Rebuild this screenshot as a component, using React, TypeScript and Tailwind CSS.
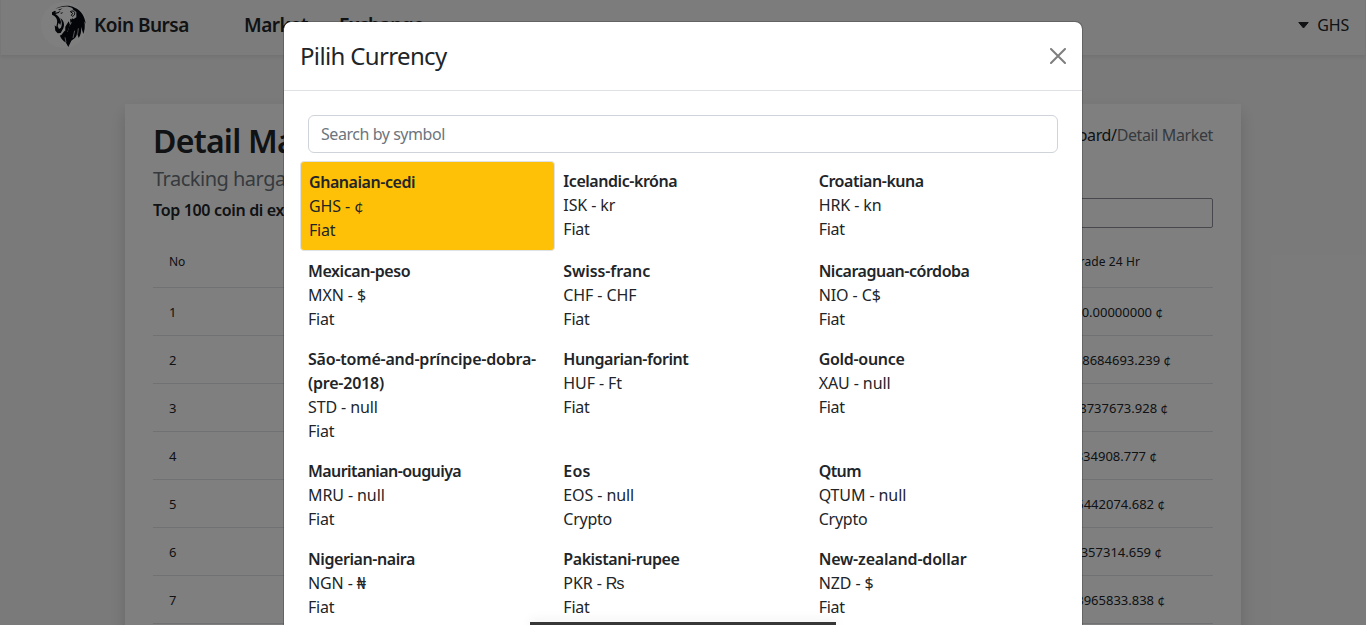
import React from "react";

type Currency = { name: string; code: string; sign: string; kind: string; fit: string };

const currencies: Currency[] = [
  { name: "Ghanaian-cedi", code: "GHS", sign: "¢", kind: "Fiat", fit: "tracking-[-0.45px]" },
  { name: "Icelandic-króna", code: "ISK", sign: "kr", kind: "Fiat", fit: "tracking-[-0.45px]" },
  { name: "Croatian-kuna", code: "HRK", sign: "kn", kind: "Fiat", fit: "tracking-[-0.45px]" },
  { name: "Mexican-peso", code: "MXN", sign: "$", kind: "Fiat", fit: "tracking-[-0.42px]" },
  { name: "Swiss-franc", code: "CHF", sign: "CHF", kind: "Fiat", fit: "tracking-[-0.08px]" },
  { name: "Nicaraguan-córdoba", code: "NIO", sign: "C$", kind: "Fiat", fit: "tracking-[-0.47px]" },
  { name: "São-tomé-and-príncipe-dobra-(pre-2018)", code: "STD", sign: "null", kind: "Fiat", fit: "tracking-[-0.21px]" },
  { name: "Hungarian-forint", code: "HUF", sign: "Ft", kind: "Fiat", fit: "tracking-[-0.44px]" },
  { name: "Gold-ounce", code: "XAU", sign: "null", kind: "Fiat", fit: "tracking-[-0.3px]" },
  { name: "Mauritanian-ouguiya", code: "MRU", sign: "null", kind: "Fiat", fit: "tracking-[-0.58px]" },
  { name: "Eos", code: "EOS", sign: "null", kind: "Crypto", fit: "tracking-[0.2px]" },
  { name: "Qtum", code: "QTUM", sign: "null", kind: "Crypto", fit: "tracking-[-0.6px]" },
  { name: "Nigerian-naira", code: "NGN", sign: "₦", kind: "Fiat", fit: "tracking-[-0.42px]" },
  { name: "Pakistani-rupee", code: "PKR", sign: "₨", kind: "Fiat", fit: "tracking-[-0.44px]" },
  { name: "New-zealand-dollar", code: "NZD", sign: "$", kind: "Fiat", fit: "tracking-[-0.18px]" },
];

const trades = [
  "0.00000000",
  "28684693.239",
  "98737673.928",
  "834908.777",
  "5442074.682",
  "6357314.659",
  "3965833.838",
];
const tradeInset = ["pr-[50px]", "pr-[42px]", "pr-[45px]", "pr-[56px]", "pr-[48px]", "pr-[51px]", "pr-[48px]"];

function Sign({ children }: { children: string }) {
  if (children === "₨") {
    return <span className="font-['Liberation_Sans','DejaVu_Sans',sans-serif] leading-none">{children}</span>;
  }
  if (children === "¢") {
    return <span className="font-['Lato','DejaVu_Sans',sans-serif] leading-none">{children}</span>;
  }
  return <>{children}</>;
}

function LionLogo() {
  return (
    <svg className="h-[46px] w-[46px]" viewBox="0 0 138 138">
      <circle cx="69" cy="69" r="69" fill="#fff" />
      <g transform="translate(15 -6)">
        <path
          d="M28 27C40 18 68 13 86 23c19 7 31 26 33 49l-4-8c3 16 1 27-3 38l-7-22c2 14-1 25-7 34l-5-16c0 13-9 18-17 24l-9 19-8-14c-12-7-20-20-20-35l22-14 20-52C64 15 44 21 28 27z"
          fill="#060b10"
        />
        <path
          d="M19 38l13-10c17-9 38-8 50 1l9 7v16l-8 5-5-2-4 10 4 2-9 13-4 16-9-4-10 13-10 4-8-8 2-11 6 5 4-3-3-10 2-12-9-12-12-7z"
          fill="#fff"
        />
        <path
          d="M18 37l9-5 3 3-3 3 8-1 9-5-6 7-10 3c9 5 15 13 17 24l-2 9-5-7-3 10 4 9 6-4c4-9 3-19-2-29 10 7 14 19 9 31l-8 14-9 1-7-8-2-16 5 4 2-10c2-9-1-17-8-22l-7-4z"
          fill="#060b10"
        />
        <path d="M42 39l10-2-5 4zM36 29l14-4-9 6z" fill="#060b10" />
        <path d="M73 35c6-4 12-2 13 3s-2 9-6 11l-4-3 4-6z" fill="#fff" stroke="#060b10" strokeWidth="3" />
        <path d="M58 80l10-16 4 10-8 22-7 8zM72 56l8 5-6 10z" fill="#060b10" />
        <path d="M86 92l-5 22M97 85l-2 16M57 112l3 15" stroke="#fff" strokeWidth="2" fill="none" />
      </g>
    </svg>
  );
}

function Navbar() {
  return (
    <header className="flex h-[55px] w-full items-start border-x border-[#eee] bg-[#f8f8f8] shadow-[0_2px_4px_rgba(0,0,0,0.08)]">
      <div className="flex h-[50px] items-center pl-10 text-[19px] font-semibold tracking-[-0.5px]">
        <LionLogo />
        <span className="ml-[7px] w-[150px]">Koin Bursa</span>
        <span className="w-[95px]">Market</span>
        <span>Exchange</span>
      </div>
      <div className="ml-auto flex h-[50px] items-center gap-2 pr-4">
        <svg className="h-[7px] w-[11px]" viewBox="0 0 11 7">
          <path d="M.8.5h9.4L5.5 6z" fill="#212529" stroke="#212529" strokeLinejoin="round" />
        </svg>
        <span className="tracking-[-0.2px]">GHS</span>
      </div>
    </header>
  );
}

function MarketPage() {
  return (
    <main className="mx-auto mt-[49px] h-[700px] w-[1116px] bg-white px-7 pt-[18px] shadow-[0_8px_16px_rgba(0,0,0,0.15)]">
      <div className="flex justify-between">
        <div>
          <h1 className="text-[32px] leading-[38px] font-semibold tracking-[-0.75px]">Detail Market</h1>
          <p className="text-[20px] leading-[38px] tracking-[-0.5px] text-[#6c757d]">Tracking harga crypto</p>
          <p className="leading-6 font-semibold tracking-[-0.33px]">Top 100 coin di exchange</p>
        </div>
        <div className="flex flex-col items-end">
          <div className="mt-[1px] leading-6 tracking-[-0.38px]">
            Dashboard/<span className="text-[#6c757d]">Detail Market</span>
          </div>
          <div className="mt-[51px] h-[30px] w-[190px] rounded-[2px] border border-[#8f8f9d]" />
        </div>
      </div>
      <div className="mt-2 text-[13px]">
        <div className="flex h-[52px] items-center justify-between border-b border-[#dee2e6] pr-[73px] pl-4 text-[12px]">
          <span>No</span>
          <span className="tracking-[0.1px]">Trade 24 Hr</span>
        </div>
        {trades.map((value, i) => (
          <div key={value} className={`flex h-12 items-center justify-between border-b border-[#dee2e6] pl-4 ${tradeInset[i]}`}>
            <span>{i + 1}</span>
            <span>
              {value} <Sign>¢</Sign>
            </span>
          </div>
        ))}
      </div>
    </main>
  );
}

function CurrencyModal() {
  return (
    <section className="w-[800px] rounded-lg border border-black/20 bg-white bg-clip-padding">
      <div className="flex h-[69px] items-center justify-between border-b border-[#dee2e6] px-4">
        <h2 className="text-[24px] leading-9 tracking-[-0.65px]">Pilih Currency</h2>
        <svg className="h-4 w-4 opacity-50" viewBox="0 0 16 16">
          <path d="M1 1l14 14M15 1L1 15" stroke="#000" strokeWidth="2" strokeLinecap="round" />
        </svg>
      </div>
      <div className="p-4">
        <div className="p-2">
          <input
            className="block h-[38px] w-full rounded-md border border-[#ced4da] px-3 tracking-[-0.45px] placeholder:text-[#6c757d] placeholder:opacity-100"
            placeholder="Search by symbol"
          />
        </div>
        <div className="grid grid-cols-3">
          {currencies.map((c, i) => (
            <div key={c.name} className={i === 0 ? "rounded-[4px] border border-[#dee2e6] bg-[#ffc107] p-2" : "p-2"}>
              <p className={`font-semibold ${c.fit}`}>{c.name}</p>
              <p className="h-6 tracking-[-0.1px]">
                {c.code} - <Sign>{c.sign}</Sign>
              </p>
              <p className="tracking-[-0.25px]">{c.kind}</p>
            </div>
          ))}
        </div>
      </div>
    </section>
  );
}

export default function App() {
  return (
    <div className="relative h-[625px] w-full overflow-hidden bg-[#f5f5f5] font-['Noto_Sans','DejaVu_Sans',sans-serif] text-[16px] leading-6 text-[#212529]">
      <Navbar />
      <MarketPage />
      <div className="absolute inset-0 flex items-start justify-center overflow-hidden bg-black/50 pt-[21px]">
        <CurrencyModal />
      </div>
      <div className="absolute bottom-0 left-[530px] h-[3px] w-[306px] bg-[#373737] shadow-[0_0_12px_rgba(0,0,0,0.15)]" />
    </div>
  );
}
